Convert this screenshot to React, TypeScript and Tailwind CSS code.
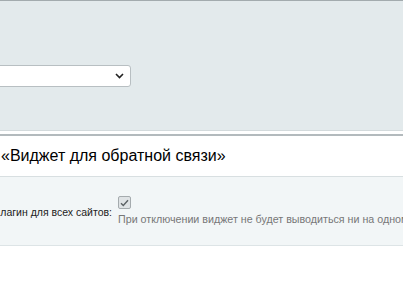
export default function App() {
  return (
    <div className="h-[294px] w-[403px] overflow-hidden bg-white font-['Liberation_Sans',Arial,sans-serif]">
      {/* top filter panel */}
      <div className="h-[131px] border-t border-b border-t-[#a3abae] border-b-[#d3dadc] bg-[#e3eaec]">
        <div className="pt-[64px]">
          <div className="ml-[-8px] flex h-[22px] w-[139px] items-center justify-end rounded-[3px] border border-[#b8bfc2] bg-white pr-[6px]">
            <svg width="9" height="6" viewBox="0 0 9 6" className="text-[#222]">
              <path d="M1 1l3.5 3.5L8 1" fill="none" stroke="currentColor" strokeWidth="1.6" />
            </svg>
          </div>
        </div>
      </div>

      <div className="mt-[3px] border-t-2 border-[#b3babd]">
        {/* title */}
        <div className="flex h-[41px] items-center border-b border-[#d8dfe1] pl-[1px]">
          <h2 className="whitespace-nowrap text-[16px] leading-none text-black">«Виджет для обратной связи»</h2>
        </div>

        {/* option row */}
        <div className="flex h-[69px] border-b border-[#dde4e6] bg-[#f2f6f7] pt-[19px]">
          <div className="flex w-[112px] shrink-0 justify-end pt-[8px]">
            <span className="whitespace-nowrap text-[10.5px] leading-[16px] text-[#222]">Включить плагин для всех сайтов:</span>
          </div>
          <div className="pl-[6px]">
            <div className="flex h-[13px] w-[13px] items-center justify-center rounded-[2px] border border-[#a5abae] bg-[#dfe3e5]">
              <svg width="9" height="8" viewBox="0 0 9 8">
                <path d="M1 4.2l2.3 2.3L8 1.2" fill="none" stroke="#5b6164" strokeWidth="1.4" />
              </svg>
            </div>
            <div className="mt-[3px] whitespace-nowrap text-[10.7px] leading-[15px] text-[#777]">
              При отключении виджет не будет выводиться ни на одном сайте
            </div>
          </div>
        </div>
      </div>
    </div>
  )
}
